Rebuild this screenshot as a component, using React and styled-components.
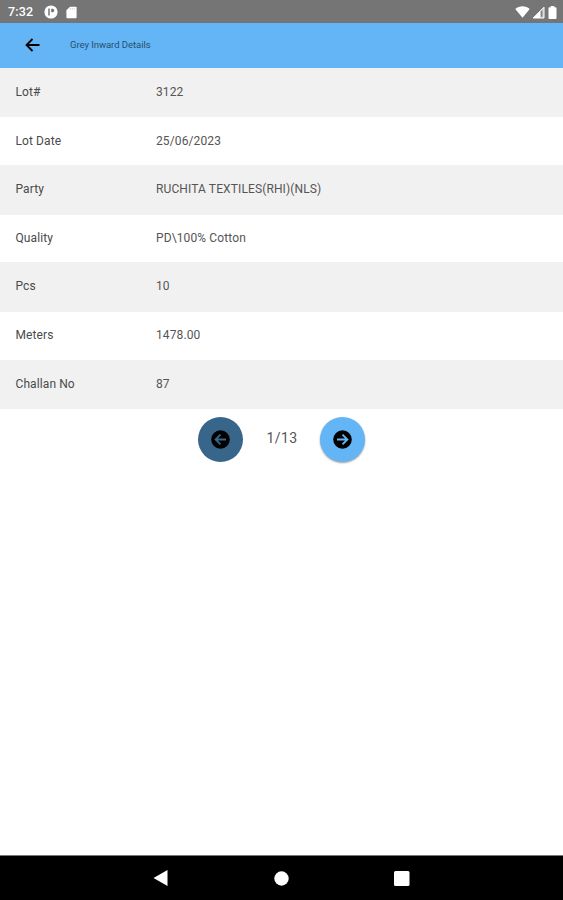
import styled, { createGlobalStyle } from "styled-components";

const GlobalStyle = createGlobalStyle`
  body {
    margin: 0;
    background-color: #fff;
    font-family: Roboto, "Liberation Sans", sans-serif;
  }
`;

const Screen = styled.div`
  display: flex;
  flex-direction: column;
  height: 100vh;
  overflow: hidden;
`;

const StatusBar = styled.div`
  display: flex;
  align-items: center;
  flex: none;
  box-sizing: border-box;
  height: 23px;
  padding: 1px 6.5px 0 8px;
  background-color: #757575;
  color: #fff;
`;

const Clock = styled.span`
  width: 36px;
  font-size: 12.5px;
  font-weight: 500;
  line-height: 22px;
  letter-spacing: 0.2px;
`;

const StatusIcons = styled.div`
  display: flex;
  align-items: center;
  gap: ${(props) => props.$gap};
  margin-left: ${(props) => (props.$right ? "auto" : "0")};
`;

const Header = styled.header`
  display: flex;
  align-items: center;
  flex: none;
  box-sizing: border-box;
  height: 45px;
  padding: 0 0 0.5px 25px;
  background-color: #64b5f6;
`;

const BackButton = styled.button`
  display: flex;
  margin: 0 30px 0 0;
  padding: 0;
  border: none;
  background: none;
  cursor: pointer;
`;

const Title = styled.h1`
  margin: 0;
  font-size: 9.5px;
  font-weight: 400;
  line-height: 12px;
  letter-spacing: -0.05px;
  color: #27506f;
`;

const Details = styled.dl`
  flex: none;
  margin: 0;
`;

const Row = styled.div`
  display: flex;
  align-items: center;
  box-sizing: border-box;
  height: ${(props) => (props.$shaded ? "49.4px" : "47.8px")};
  padding: 0 15.5px 1.3px;
  background-color: ${(props) => (props.$shaded ? "#f1f1f1" : "#fff")};
`;

const Label = styled.dt`
  width: 140.5px;
  font-size: 12px;
  letter-spacing: 0.1px;
  color: #4a4a4a;
`;

const Value = styled.dd`
  margin: 0;
  font-size: 12px;
  letter-spacing: 0.12px;
  color: #555;
`;

const Pager = styled.div`
  display: flex;
  align-items: center;
  justify-content: center;
  flex: none;
  padding-top: 8px;
`;

const PagerButton = styled.button`
  display: flex;
  align-items: center;
  justify-content: center;
  width: 45px;
  height: 45px;
  padding: 0;
  border: none;
  border-radius: 50%;
  color: ${(props) => (props.disabled ? "#38658a" : "#64b5f6")};
  background-color: currentColor;
  box-shadow: ${(props) =>
    props.disabled ? "none" : "0 1px 2px rgba(0, 0, 0, 0.4)"};
`;

const PageCount = styled.span`
  box-sizing: border-box;
  width: 77px;
  padding: 0 0 3px 1px;
  font-size: 14px;
  letter-spacing: 0.4px;
  text-align: center;
  color: #555;
`;

const NavBar = styled.nav`
  display: flex;
  align-items: center;
  justify-content: center;
  gap: 105px;
  flex: none;
  box-sizing: border-box;
  height: 45px;
  margin-top: auto;
  border-top: 1px solid #777;
  background-color: #000;
`;

const details = [
  { label: "Lot#", value: "3122" },
  { label: "Lot Date", value: "25/06/2023" },
  { label: "Party", value: "RUCHITA TEXTILES(RHI)(NLS)" },
  { label: "Quality", value: "PD\\100% Cotton" },
  { label: "Pcs", value: "10" },
  { label: "Meters", value: "1478.00" },
  { label: "Challan No", value: "87" }
];

const AppIcon = () => (
  <svg width="14" height="14" viewBox="0 0 14 14">
    <circle cx="7" cy="7" r="6.6" fill="#fff" />
    <path d="M5 3.6v6.8" stroke="#757575" strokeWidth="1.5" />
    <path d="M7.2 3.8h1.4a1.5 1.5 0 0 1 0 3.4H7.2z" fill="#757575" />
  </svg>
);

const CardIcon = () => (
  <svg width="11" height="13" viewBox="0 0 11 13">
    <path
      d="M4 .7h5.6a1 1 0 0 1 1 1v9.6a1 1 0 0 1-1 1H1.4a1 1 0 0 1-1-1V4.3z"
      fill="#fff"
    />
    <path d="M4.3 2v1.6M6.3 2v1.6M8.3 2v1.6" stroke="#ccc" strokeWidth=".8" />
  </svg>
);

const WifiIcon = () => (
  <svg width="15" height="12" viewBox="0 0 15 12">
    <path d="M7.5 11.8.3 2.9C4.2-.5 10.8-.5 14.7 2.9z" fill="#fff" />
  </svg>
);

const SignalIcon = () => (
  <svg width="13" height="13" viewBox="0 0 13 13">
    <path d="M12 1.2V12H1.2z" fill="#bbb" stroke="#fff" />
    <path d="M8.2 5.2V12H1.2z" fill="#fff" />
    <path d="M9.7 5v5.5" stroke="#757575" />
  </svg>
);

const BatteryIcon = () => (
  <svg width="9" height="13" viewBox="0 0 9 13">
    <path
      d="M2.7 0h3.6v1.3h1.2a1 1 0 0 1 1 1V12a1 1 0 0 1-1 1h-6a1 1 0 0 1-1-1V2.3a1 1 0 0 1 1-1h1.2z"
      fill="#fff"
    />
  </svg>
);

const BackArrow = () => (
  <svg width="15" height="14" viewBox="0 0 15 14">
    <path
      d="M14.5 7h-13M7.5 1l-6 6 6 6"
      fill="none"
      stroke="#000"
      strokeWidth="1.8"
    />
  </svg>
);

const CircleArrow = ({ left }) => (
  <svg width="19" height="19" viewBox="0 0 19 19">
    <circle cx="9.5" cy="9.5" r="9.3" fill="#000" />
    <path
      d="M4 9.5h10.3M9.5 4.6l4.9 4.9-4.9 4.9"
      fill="none"
      stroke="currentColor"
      strokeWidth="1.8"
      transform={left ? "rotate(180 9.5 9.5)" : undefined}
    />
  </svg>
);

const App = () => {
  return (
    <Screen>
      <GlobalStyle />
      <StatusBar>
        <Clock>7:32</Clock>
        <StatusIcons $gap="8px">
          <AppIcon />
          <CardIcon />
        </StatusIcons>
        <StatusIcons $right $gap="2.5px">
          <WifiIcon />
          <SignalIcon />
          <BatteryIcon />
        </StatusIcons>
      </StatusBar>
      <Header>
        <BackButton type="button" aria-label="Back">
          <BackArrow />
        </BackButton>
        <Title>Grey Inward Details</Title>
      </Header>
      <Details>
        {details.map(({ label, value }, index) => (
          <Row key={label} $shaded={index % 2 === 0}>
            <Label>{label}</Label>
            <Value>{value}</Value>
          </Row>
        ))}
      </Details>
      <Pager>
        <PagerButton type="button" aria-label="Previous" disabled>
          <CircleArrow left />
        </PagerButton>
        <PageCount>1/13</PageCount>
        <PagerButton type="button" aria-label="Next">
          <CircleArrow />
        </PagerButton>
      </Pager>
      <NavBar>
        <svg width="16" height="16" viewBox="0 0 16 16">
          <path d="M14.5 0v16L.5 8z" fill="#fff" />
        </svg>
        <svg width="15" height="15" viewBox="0 0 15 15">
          <circle cx="7.5" cy="7.5" r="7.2" fill="#fff" />
        </svg>
        <svg width="16" height="15" viewBox="0 0 16 15">
          <rect width="15.5" height="15" rx="1.5" fill="#fff" />
        </svg>
      </NavBar>
    </Screen>
  );
};

export default App;
